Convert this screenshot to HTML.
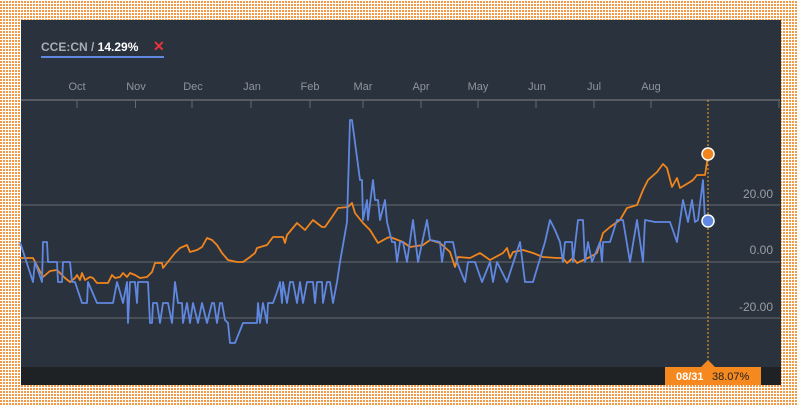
<!DOCTYPE html>
<html><head><meta charset="utf-8"><style>
html,body{margin:0;padding:0}
body{width:798px;height:405px;overflow:hidden;position:relative;background:#fff;font-family:"Liberation Sans",sans-serif}
#bg{position:absolute;left:0;top:0;width:798px;height:405px;background-image:repeating-linear-gradient(90deg,rgba(255,255,255,0) 0 2px,#fff 2px 3px),repeating-linear-gradient(0deg,rgba(255,255,255,0) 0 2px,#fff 2px 3px);background-color:#f39a48}
#p{position:absolute;left:21px;top:20px;width:760px;height:365px;background:#2a323d}
svg{position:absolute;left:0;top:0}
</style></head><body>
<div id="bg"></div>
<div id="p"></div>
<svg width="798" height="405" viewBox="0 0 798 405">
<rect x="21" y="367" width="760" height="18" fill="#1f2225"/>
<text x="41" y="51" font-size="12" font-weight="bold" fill="#a9adb3" font-family="Liberation Sans, sans-serif">CCE:CN / <tspan fill="#fff">14.29%</tspan></text>
<text x="153" y="51" font-size="14" font-weight="bold" fill="#e8343c" font-family="Liberation Sans, sans-serif">✕</text>
<rect x="41" y="56" width="123" height="2" fill="#6088e0"/>
<g font-size="11" fill="#8f959c" text-anchor="middle" font-family="Liberation Sans, sans-serif">
<text x="77" y="90">Oct</text><text x="136" y="90">Nov</text><text x="193" y="90">Dec</text><text x="252" y="90">Jan</text><text x="310" y="90">Feb</text><text x="363" y="90">Mar</text><text x="421" y="90">Apr</text><text x="478" y="90">May</text><text x="537" y="90">Jun</text><text x="594" y="90">Jul</text><text x="651" y="90">Aug</text>
</g>
<line x1="21" y1="100" x2="780" y2="100" stroke="#666b71" stroke-width="1.5"/>
<g stroke="#666b71" stroke-width="1">
<line x1="77" y1="100" x2="77" y2="108"/><line x1="135.5" y1="100" x2="135.5" y2="108"/><line x1="192" y1="100" x2="192" y2="108"/><line x1="251" y1="100" x2="251" y2="108"/><line x1="310" y1="100" x2="310" y2="108"/><line x1="363" y1="100" x2="363" y2="108"/><line x1="421" y1="100" x2="421" y2="108"/><line x1="478" y1="100" x2="478" y2="108"/><line x1="536" y1="100" x2="536" y2="108"/><line x1="594" y1="100" x2="594" y2="108"/><line x1="651" y1="100" x2="651" y2="108"/><line x1="779" y1="100" x2="779" y2="108"/>
</g>
<g stroke="#5c6167" stroke-width="1.2">
<line x1="21" y1="205" x2="780" y2="205"/><line x1="21" y1="262" x2="780" y2="262"/><line x1="21" y1="318" x2="780" y2="318"/>
</g>
<g font-size="12" fill="#9a9fa5" text-anchor="end" font-family="Liberation Sans, sans-serif">
<text x="773" y="198">20.00</text><text x="773" y="254">0.00</text><text x="773" y="311">-20.00</text>
</g>
<polyline fill="none" stroke="#f0851e" stroke-width="1.8" stroke-linejoin="round" points="20,258 33,258 43,277 50,271 57,270 65,278 70,282 75,278 77,275 80,280 82,273 85,280 90,277 93,278 97,283 102,283 108,283 112,275 115,278 120,277 123,273 127,277 130,273 135,275 140,278 147,277 152,272 155,263 162,263 163,268 167,263 175,253 180,248 187,245 190,252 197,250 202,247 207,238 212,240 217,245 222,253 228,260 237,262 243,262 250,257 255,253 257,248 267,245 273,237 283,237 285,243 287,235 297,223 305,230 313,220 322,227 325,227 332,217 338,208 348,207 352,203 355,213 363,223 370,230 378,243 387,238 390,237 403,242 410,247 423,245 430,240 440,243 450,252 455,267 458,257 470,258 480,253 490,260 503,253 507,248 510,258 513,252 523,250 533,253 543,257 557,258 563,258 567,263 573,258 577,263 590,257 597,253 603,233 610,227 620,220 627,208 637,205 643,190 648,180 657,172 663,164 667,168 672,187 677,178 680,188 690,182 693,180 697,175 705,175 708,156"/>
<polyline fill="none" stroke="#6088e0" stroke-width="1.8" stroke-linejoin="round" points="20,242 33,282 35,262 42,282 43,242 47,242 48,262 57,262 58,282 62,282 63,262 70,262 72,282 75,282 82,303 87,303 88,282 97,303 113,303 117,282 120,292 123,303 127,282 128,323 130,282 135,282 137,303 138,282 148,282 150,323 152,323 153,303 157,303 160,323 163,303 168,303 172,323 175,282 178,303 182,303 183,323 187,303 190,323 193,303 198,323 202,303 207,323 212,303 214,303 217,323 220,303 222,303 225,320 228,323 230,343 235,343 243,323 257,323 258,303 260,323 263,303 267,323 268,303 273,303 277,292 280,282 282,303 283,282 287,303 290,282 293,282 297,303 300,282 303,303 307,282 313,282 315,303 317,282 322,282 323,303 327,282 330,282 333,303 337,282 340,262 347,222 350,120 352,120 360,180 362,180 363,220 367,200 368,220 373,180 375,200 378,200 380,220 385,200 387,222 392,242 395,242 397,262 400,242 403,242 407,262 413,220 418,262 427,220 430,240 440,242 442,262 445,242 453,242 457,262 465,282 468,262 475,262 482,282 490,262 493,282 497,262 507,282 520,242 525,282 533,282 545,242 550,220 555,230 560,242 563,262 565,242 572,242 573,262 578,220 583,220 585,262 588,242 592,262 600,242 602,262 603,242 610,242 617,220 623,220 630,262 637,220 643,262 645,220 655,222 670,222 677,242 683,200 688,222 692,200 695,222 698,220 703,180 705,222"/>
<line x1="708" y1="100" x2="708" y2="362" stroke="#f5a623" stroke-width="1" stroke-dasharray="2,2"/>
<circle cx="708" cy="154" r="6" fill="#f0851e" stroke="#fff" stroke-width="1.5"/>
<circle cx="708" cy="221" r="6" fill="#6088e0" stroke="#fff" stroke-width="1.5"/>
<polygon points="701,367 708,360 715,367" fill="#f5891f"/>
<rect x="665" y="367" width="96" height="18" fill="#f5891f"/>
<text x="676" y="380" font-size="11" font-weight="bold" fill="#fff" font-family="Liberation Sans, sans-serif">08/31</text>
<text x="712" y="380" font-size="11" fill="#222" font-family="Liberation Sans, sans-serif">38.07%</text>
</svg>
</body></html>
